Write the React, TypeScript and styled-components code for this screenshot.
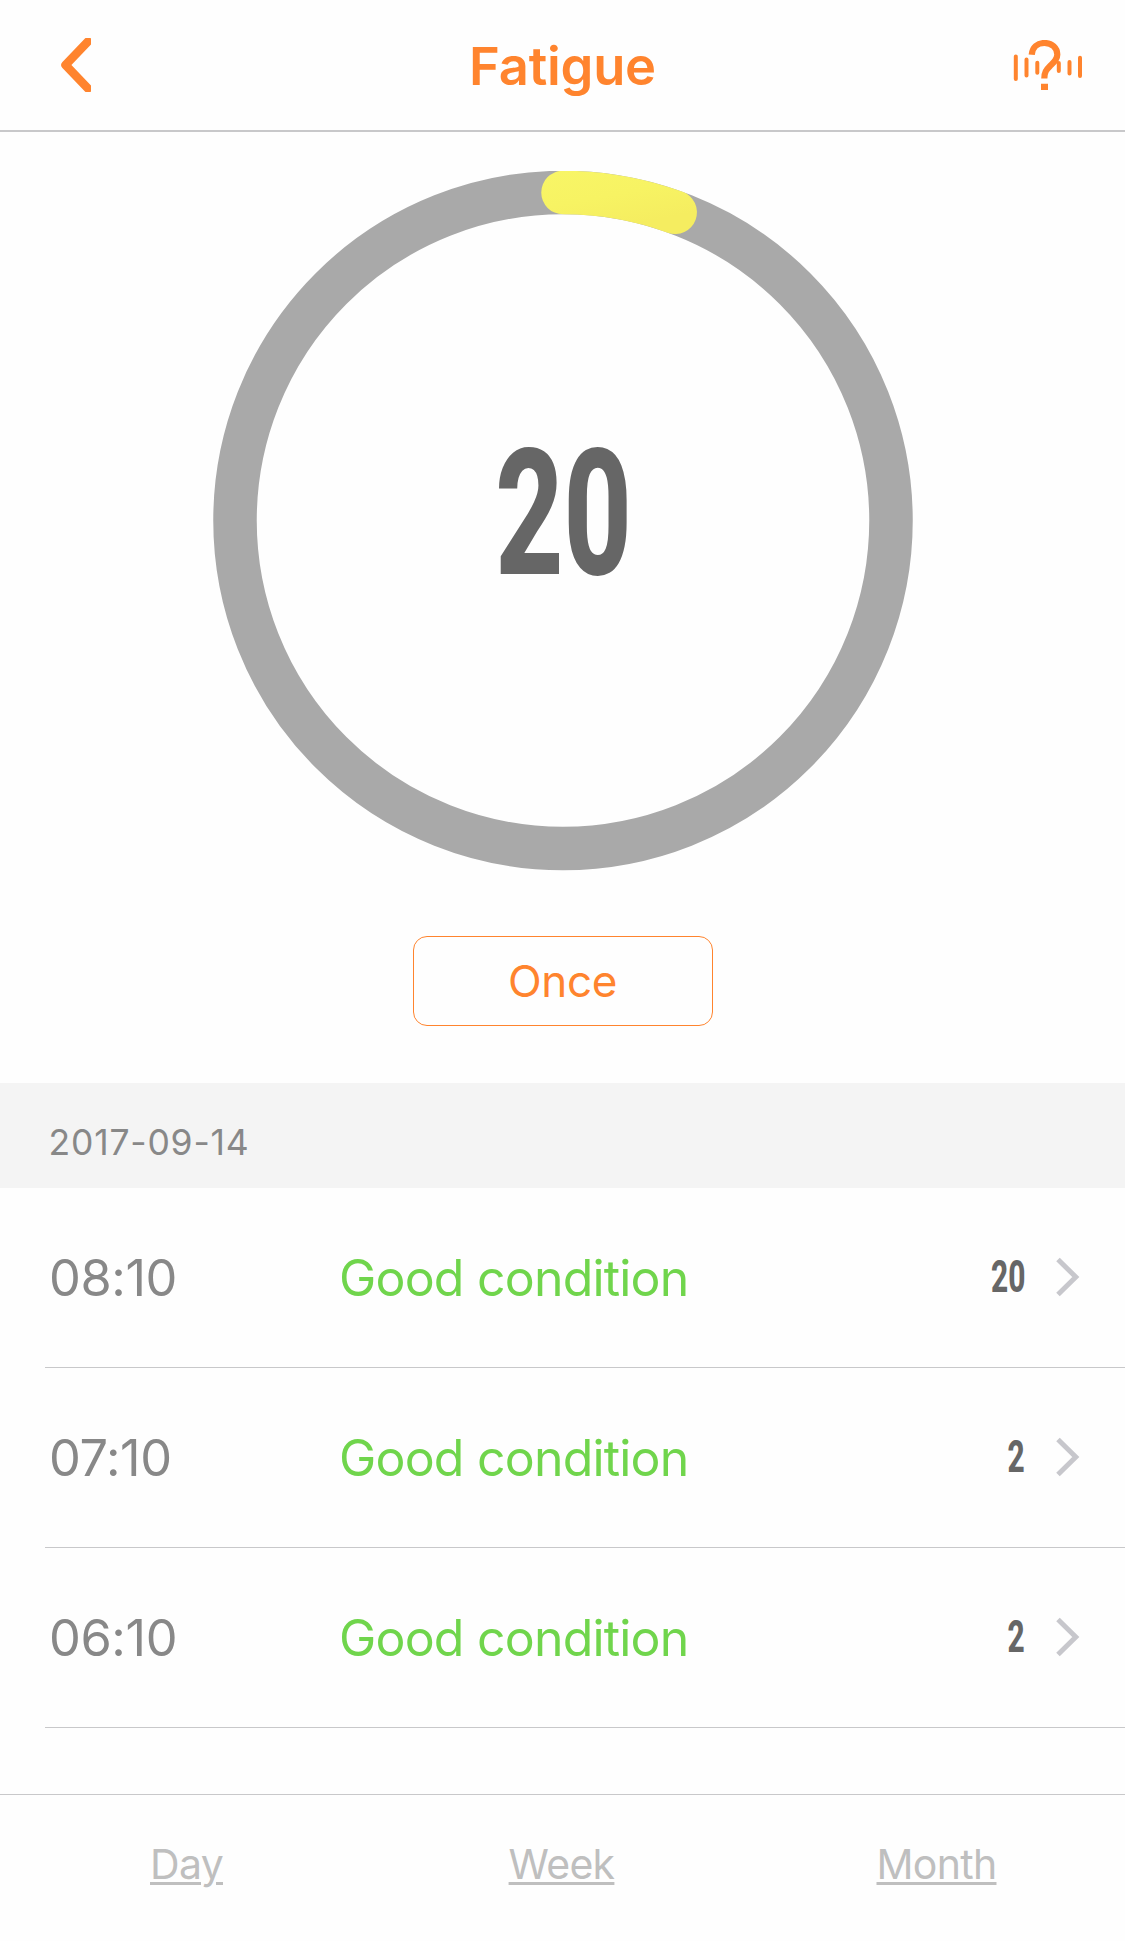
import React from "react";
import styled, { createGlobalStyle } from "styled-components";

const ORANGE = "#ff842e";

const GlobalStyle = createGlobalStyle`
  *, *::before, *::after { box-sizing: border-box; }
  body {
    margin: 0;
    background: #fefefe;
    font-family: Inter, "Liberation Sans", sans-serif;
  }
  button { font-family: inherit; background: none; border: 0; padding: 0; }
`;

const Screen = styled.div`
  width: 1125px;
  height: 1941px;
  display: flex;
  flex-direction: column;
  overflow: hidden;
`;

const Header = styled.header`
  height: 132px;
  flex: none;
  display: grid;
  grid-template-columns: 200px 1fr 200px;
  align-items: center;
  border-bottom: 2px solid #c8c8ca;
`;

const IconButton = styled.button<{ $end?: boolean }>`
  height: 130px;
  display: flex;
  align-items: center;
  justify-content: ${(p) => (p.$end ? "flex-end" : "flex-start")};
  padding: ${(p) => (p.$end ? "0 43px 0 0" : "0 0 0 61px")};
`;

const Title = styled.h1`
  margin: 0;
  padding-top: 1px;
  text-align: center;
  font-size: 52.5px;
  line-height: 64px;
  font-weight: 600;
  letter-spacing: -0.2px;
  color: ${ORANGE};
`;

const Gauge = styled.section`
  height: 951px;
  flex: none;
  display: flex;
  flex-direction: column;
  align-items: center;
  padding-top: 39px;
`;

const Dial = styled.div`
  display: grid;
  width: 700px;
  height: 700px;
  place-items: center;
  > * { grid-area: 1 / 1; }
`;

const Score = styled.div<{ $size: number }>`
  font-family: Roboto, "Liberation Sans Narrow", sans-serif;
  font-weight: 800;
  font-size: ${(p) => p.$size}px;
  line-height: 1;
  color: #666;
  transform: scaleX(0.67);
`;

const DialScore = styled(Score)`
  padding: 0 0 15px 3px;
`;

const RowScore = styled(Score)`
  padding-top: 2px;
  transform-origin: right center;
  text-align: right;
`;

const OnceButton = styled.button`
  width: 300px;
  height: 90px;
  margin-top: 65px;
  border: 1px solid ${ORANGE};
  border-radius: 14px;
  color: ${ORANGE};
  font-size: 44px;
  line-height: 88px;
  letter-spacing: -0.4px;
`;

const DateBar = styled.div`
  height: 105px;
  flex: none;
  padding: 14px 48.5px 0;
  background: #f4f4f4;
  color: #888;
  font-size: 35.5px;
  line-height: 92px;
  letter-spacing: 0.8px;
`;

const Records = styled.ul`
  margin: 0;
  padding: 0 0 0 45px;
  list-style: none;
  flex: 1;
`;

const Record = styled.li`
  height: 180px;
  display: grid;
  grid-template-columns: 290px 1fr 100px 24px;
  align-items: center;
  padding: 0 45px 2px 4px;
  border-bottom: 1px solid #c8c8ca;
`;

const Time = styled.span`
  padding-top: 2px;
  font-size: 50.5px;
  letter-spacing: -0.4px;
  color: #888;
`;

const Status = styled.span`
  padding-top: 2px;
  font-size: 50px;
  letter-spacing: -0.8px;
  color: #70d54c;
`;

const ScoreCell = styled.div`
  padding-right: 31px;
  display: flex;
  justify-content: flex-end;
`;

const Tabs = styled.nav`
  height: 147px;
  flex: none;
  display: grid;
  grid-template-columns: repeat(3, 1fr);
  border-top: 1px solid #c8c8ca;
`;

const Tab = styled.button`
  padding: 0 2px 8px 0;
  color: #bfbfbf;
  font-size: 41px;
  letter-spacing: -0.7px;
  text-decoration: underline;
  text-decoration-thickness: 3px;
  text-underline-offset: 3px;
`;

const BackIcon = () => (
  <svg width="30" height="54" viewBox="0 0 30 54" fill="none">
    <path d="M27 3.5 4.5 27 27 50.5" stroke={ORANGE} strokeWidth="8.5" strokeLinecap="round" strokeLinejoin="round" />
  </svg>
);

const HelpIcon = () => (
  <svg width="70" height="50" viewBox="0 0 70 50" fill="none" stroke={ORANGE}>
    <path d="M3.8 16.5V39M14.5 19.5V35.5M25.3 22.8V32.8M46.8 23V31M57.5 22V33.5M68 17.7V36" strokeWidth="4" strokeLinecap="round" />
    <path d="M19.7 14.8C20.3 7.2 25.5 3 32.5 3C40 3 45.3 8 45.3 14.5C45.3 19.5 42.3 22 38.5 25.5C34 30 32.3 32.5 32.3 38.6" strokeWidth="6.2" />
    <path d="M29 47H36" strokeWidth="6.5" />
  </svg>
);

const RowChevron = () => (
  <svg width="24" height="40" viewBox="0 0 24 40" fill="none">
    <path d="M2 2.5 19.8 20 2 37.5" stroke="#c7c7cc" strokeWidth="5" />
  </svg>
);

const RADIUS = 328;

const Ring = ({ value }: { value: number }) => {
  const angle = (value * Math.PI) / 180;
  const x = 350 + RADIUS * Math.sin(angle);
  const y = 349.5 - RADIUS * Math.cos(angle);
  return (
    <svg width="700" height="700" viewBox="0 0 700 700" fill="none">
      <defs>
        <linearGradient id="level" gradientUnits="userSpaceOnUse" x1="350" y1="0" x2="362" y2="64">
          <stop offset="0" stopColor="#f8f566" />
          <stop offset="0.5" stopColor="#f7f363" />
          <stop offset="1" stopColor="#f5ed60" />
        </linearGradient>
      </defs>
      <circle cx="350" cy="349.5" r={RADIUS} stroke="#a9a9a9" strokeWidth="43.5" />
      <path
        d={`M350 ${349.5 - RADIUS}A${RADIUS} ${RADIUS} 0 0 1 ${x} ${y}`}
        stroke="url(#level)"
        strokeWidth="43.5"
        strokeLinecap="round"
      />
    </svg>
  );
};

const records = [
  { time: "08:10", status: "Good condition", score: 20 },
  { time: "07:10", status: "Good condition", score: 2 },
  { time: "06:10", status: "Good condition", score: 2 },
];

export default function App() {
  return (
    <Screen>
      <GlobalStyle />
      <Header>
        <IconButton aria-label="Back"><BackIcon /></IconButton>
        <Title>Fatigue</Title>
        <IconButton $end aria-label="Help"><HelpIcon /></IconButton>
      </Header>
      <Gauge>
        <Dial>
          <Ring value={20} />
          <DialScore $size={177}>20</DialScore>
        </Dial>
        <OnceButton>Once</OnceButton>
      </Gauge>
      <DateBar>2017-09-14</DateBar>
      <Records>
        {records.map((r) => (
          <Record key={r.time}>
            <Time>{r.time}</Time>
            <Status>{r.status}</Status>
            <ScoreCell><RowScore $size={44.5}>{r.score}</RowScore></ScoreCell>
            <RowChevron />
          </Record>
        ))}
      </Records>
      <Tabs>
        <Tab>Day</Tab>
        <Tab>Week</Tab>
        <Tab>Month</Tab>
      </Tabs>
    </Screen>
  );
}
